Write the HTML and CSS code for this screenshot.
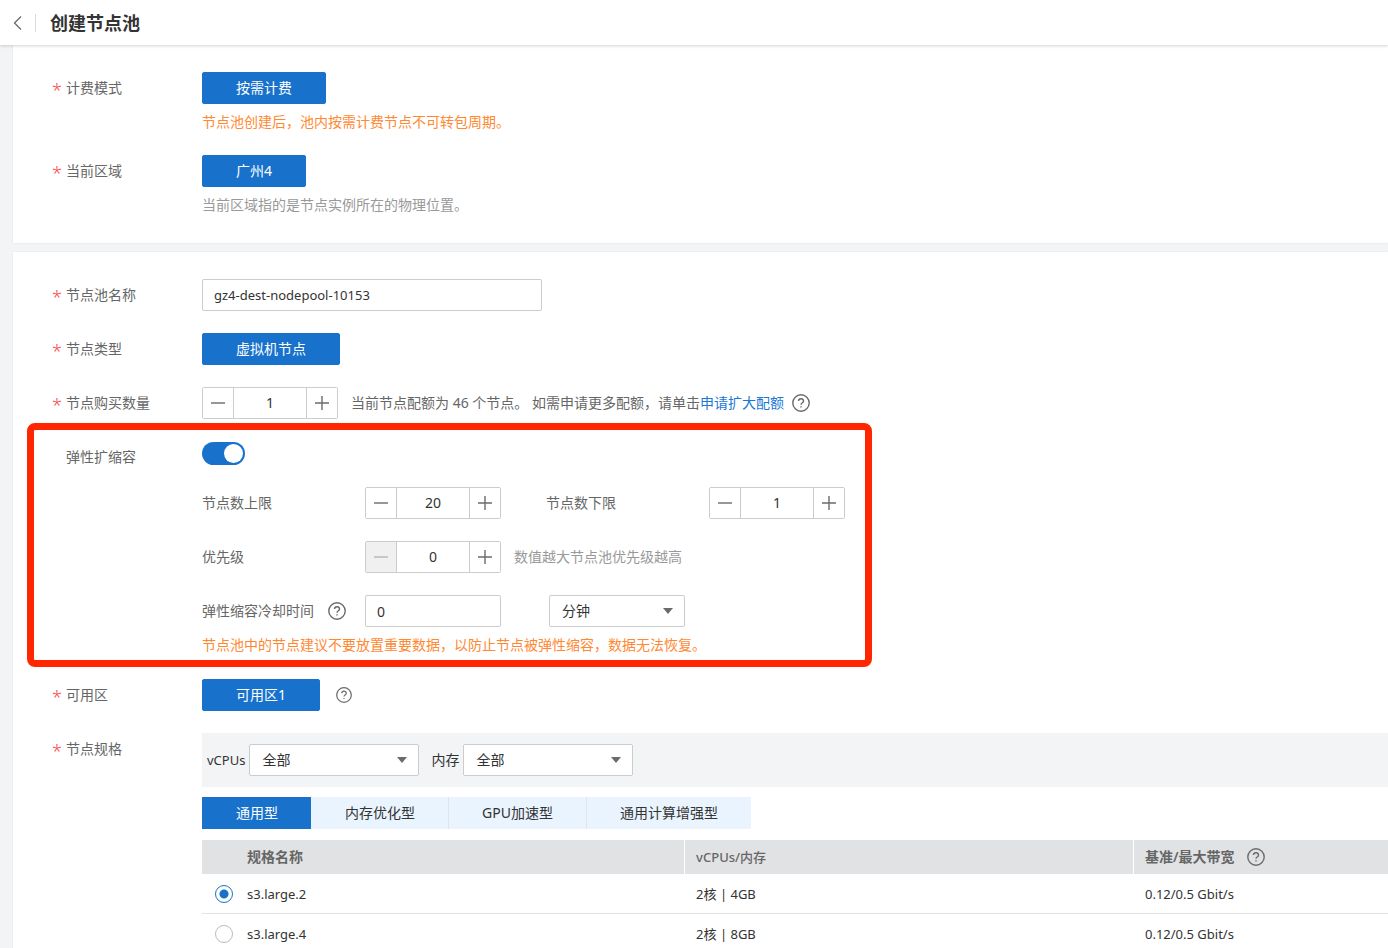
FILE: index.html
```html
<!DOCTYPE html>
<html lang="zh-CN">
<head>
<meta charset="utf-8">
<meta name="viewport" content="width=device-width, initial-scale=1">
<title>创建节点池</title>
<link rel="stylesheet" href="styles.css">
</head>
<body>
<svg class="sprite" aria-hidden="true">
  <symbol id="help" viewBox="0 0 18 18"><circle cx="9" cy="9" r="8.2"/><path d="M6.5 7.1C6.5 5.6 7.5 4.7 9 4.7s2.5.9 2.5 2.2c0 1.1-.6 1.6-1.3 2.1C9.400 9.500 9 9.900 9 10.800M9 12.300v1.300"/></symbol>
  <symbol id="minus" viewBox="0 0 14 14"><path d="M0 7h14"/></symbol>
  <symbol id="plus" viewBox="0 0 14 14"><path d="M0 7h14M7 0v14"/></symbol>
</svg>

<header class="topbar">
  <button class="back" type="button" aria-label="返回"><svg viewBox="0 0 9 14"><path d="M8 .5 1.500 7 8 13.500"/></svg></button>
  <h1 class="title">创建节点池</h1>
</header>

<main class="page">
  <section class="card card-billing">
    <div class="row">
      <span class="label required">计费模式</span>
      <div class="field">
        <button class="choice" type="button">按需计费</button>
        <p class="hint warn">节点池创建后，池内按需计费节点不可转包周期。</p>
      </div>
    </div>
    <div class="row">
      <span class="label required">当前区域</span>
      <div class="field">
        <button class="choice" type="button">广州4</button>
        <p class="hint">当前区域指的是节点实例所在的物理位置。</p>
      </div>
    </div>
  </section>

  <section class="card card-pool">
    <div class="row">
      <label class="label required" for="pool-name">节点池名称</label>
      <div class="field"><input class="text name" id="pool-name" type="text" value="gz4-dest-nodepool-10153"></div>
    </div>
    <div class="row">
      <span class="label required">节点类型</span>
      <div class="field"><button class="choice" type="button">虚拟机节点</button></div>
    </div>
    <div class="row">
      <label class="label required" for="count">节点购买数量</label>
      <div class="field line">
        <div class="stepper">
          <button type="button" aria-label="减少"><svg><use href="#minus"/></svg></button>
          <input id="count" type="text" inputmode="numeric" value="1">
          <button type="button" aria-label="增加"><svg><use href="#plus"/></svg></button>
        </div>
        <span class="quota">当前节点配额为 46 个节点。 如需申请更多配额，请单击<a href="#">申请扩大配额</a></span>
        <svg class="help"><use href="#help"/></svg>
      </div>
    </div>

    <div class="row scaling">
      <label class="label" for="scaling">弹性扩缩容</label>
      <div class="field stack">
        <div class="switch-line"><input class="switch" id="scaling" type="checkbox" role="switch" checked></div>
        <div class="line">
          <label class="sublabel" for="max">节点数上限</label>
          <div class="stepper">
            <button type="button" aria-label="减少"><svg><use href="#minus"/></svg></button>
            <input id="max" type="text" inputmode="numeric" value="20">
            <button type="button" aria-label="增加"><svg><use href="#plus"/></svg></button>
          </div>
          <label class="sublabel second" for="min">节点数下限</label>
          <div class="stepper">
            <button type="button" aria-label="减少"><svg><use href="#minus"/></svg></button>
            <input id="min" type="text" inputmode="numeric" value="1">
            <button type="button" aria-label="增加"><svg><use href="#plus"/></svg></button>
          </div>
        </div>
        <div class="line">
          <label class="sublabel" for="priority">优先级</label>
          <div class="stepper">
            <button type="button" aria-label="减少" disabled><svg><use href="#minus"/></svg></button>
            <input id="priority" type="text" inputmode="numeric" value="0">
            <button type="button" aria-label="增加"><svg><use href="#plus"/></svg></button>
          </div>
          <span class="note">数值越大节点池优先级越高</span>
        </div>
        <div>
          <div class="line">
            <div class="sublabel"><label for="cooldown">弹性缩容冷却时间</label><svg class="help"><use href="#help"/></svg></div>
            <input class="text short" id="cooldown" type="text" value="0">
            <div class="select short unit"><select aria-label="时间单位"><option>分钟</option></select></div>
          </div>
          <p class="hint warn">节点池中的节点建议不要放置重要数据，以防止节点被弹性缩容，数据无法恢复。</p>
        </div>
      </div>
    </div>

    <div class="row">
      <span class="label required">可用区</span>
      <div class="field line"><button class="choice" type="button">可用区1</button><svg class="help small"><use href="#help"/></svg></div>
    </div>

    <div class="row">
      <span class="label required">节点规格</span>
      <div class="field">
        <div class="filters">
          <label class="cpu" for="cpu">vCPUs</label>
          <div class="select"><select id="cpu"><option>全部</option></select></div>
          <label class="mem" for="mem">内存</label>
          <div class="select"><select id="mem"><option>全部</option></select></div>
        </div>
        <div class="tabs" role="tablist">
          <button class="tab active" type="button" role="tab" aria-selected="true">通用型</button>
          <button class="tab" type="button" role="tab">内存优化型</button>
          <button class="tab" type="button" role="tab">GPU加速型</button>
          <button class="tab" type="button" role="tab">通用计算增强型</button>
        </div>
        <table class="specs">
          <thead>
            <tr><th class="col-name">规格名称</th><th class="col-cpu">vCPUs/内存</th><th><div class="line">基准/最大带宽<svg class="help"><use href="#help"/></svg></div></th></tr>
          </thead>
          <tbody>
            <tr><td><label class="spec"><input type="radio" name="spec" checked>s3.large.2</label></td><td>2核 | 4GB</td><td>0.12/0.5 Gbit/s</td></tr>
            <tr><td><label class="spec"><input type="radio" name="spec">s3.large.4</label></td><td>2核 | 8GB</td><td>0.12/0.5 Gbit/s</td></tr>
          </tbody>
        </table>
      </div>
    </div>
  </section>
</main>
</body>
</html>
```

FILE: styles.css
```css
*, *::before, *::after { box-sizing: border-box; }

body {
  margin: 0;
  height: 100vh;
  display: flex;
  flex-direction: column;
  background: #f3f4f6;
  color: #333;
  font: 14px/20px "Noto Sans", "Noto Sans CJK SC", sans-serif;
}

button, input, select { font: inherit; color: inherit; margin: 0; }
button { cursor: pointer; }
a { color: #1a78d6; text-decoration: none; }
svg { fill: none; stroke: #6b6b6b; flex: none; }
.sprite { position: absolute; width: 0; height: 0; }

.topbar {
  flex: none;
  display: flex;
  align-items: center;
  height: 45px;
  background: #fff;
  box-shadow: 0 1px 3px rgba(0, 0, 0, .18);
  z-index: 1;
}
.back {
  width: 36px;
  height: 18px;
  padding: 0 0 0 13px;
  border: 0;
  border-right: 1px solid #dcdcdc;
  background: none;
  text-align: left;
}
.back svg { display: block; width: 9px; height: 14px; stroke-width: 1.3; }
.title { margin: 0 0 0 14px; font-size: 18px; line-height: 24px; font-weight: 700; }

.page {
  flex: 1;
  min-height: 0;
  padding-left: 13px;
  overflow: auto;
  scrollbar-width: none;
}

.card {
  display: flex;
  flex-direction: column;
  gap: 22px;
  padding: 27px 0 28px 39px;
  background: #fff;
  box-shadow: 0 0 2px rgba(0, 0, 0, .08);
}
.card + .card { margin-top: 9px; }
.card-billing { gap: 23px; }

.row { display: flex; align-items: flex-start; }
.label {
  flex: none;
  width: 150px;
  padding-left: 14px;
  line-height: 32px;
  color: #666;
}
.required { padding-left: 0; }
.required::before {
  content: "*";
  display: inline-block;
  width: 14px;
  color: #f5484c;
  font-size: 18px;
  font-weight: 300;
  line-height: 20px;
  vertical-align: -4px;
}
.field { flex: 1; min-width: 0; }
.line { display: flex; align-items: center; }
.stack { display: flex; flex-direction: column; gap: 22px; }

.choice {
  display: block;
  height: 32px;
  padding: 0 33px;
  border: 1px solid #1872cc;
  border-radius: 2px;
  background: #1872cc;
  color: #fff;
}
.hint { margin: 8px 0 0; color: #999; }
.warn { color: #ff8833; }

.text {
  display: block;
  height: 32px;
  padding: 0 11px;
  border: 1px solid #ccc;
  border-radius: 2px;
  background: #fff;
}
.name { width: 340px; font-size: 13px; }
.short { width: 136px; }

.stepper {
  display: flex;
  width: 136px;
  height: 32px;
  border: 1px solid #ccc;
  border-radius: 2px;
}
.stepper button {
  display: flex;
  align-items: center;
  justify-content: center;
  width: 30px;
  padding: 0;
  border: 0;
  background: #fff;
}
.stepper button:disabled { background: #f0f0f0; }
.stepper svg { width: 14px; height: 14px; stroke-width: 1.4; }
.stepper button:disabled svg { stroke: #b5b5b5; }
.stepper input {
  flex: 1;
  min-width: 0;
  padding: 0;
  border: solid #ccc;
  border-width: 0 1px;
  text-align: center;
}

.help { width: 18px; height: 18px; stroke-width: 1.4; }
.help.small { width: 16px; height: 16px; margin-left: 16px; }
.quota { margin: 0 8px 0 13px; color: #666; }
.note { margin-left: 13px; color: #999; }

.scaling { position: relative; padding-bottom: 2px; }
.scaling::after {
  content: "";
  position: absolute;
  top: -18px;
  left: -25px;
  width: 845px;
  height: 244px;
  border: 7px solid #ff2600;
  border-radius: 8px;
  pointer-events: none;
}
.switch-line { display: flex; align-items: flex-end; height: 24px; }
.switch {
  appearance: none;
  display: flex;
  justify-content: flex-end;
  width: 43px;
  height: 23px;
  padding: 2px;
  border-radius: 12px;
  background: #1872cc;
}
.switch::before { content: ""; width: 19px; height: 19px; border-radius: 50%; background: #fff; }
.sublabel { display: flex; align-items: center; gap: 14px; width: 163px; color: #666; }
.second { margin-left: 45px; }
.unit { margin-left: 48px; }

.select { display: grid; align-items: center; width: 170px; }
.select.short { width: 136px; }
.select select, .select::after { grid-area: 1 / 1; }
.select select {
  appearance: none;
  width: 100%;
  height: 32px;
  padding: 0 12px;
  border: 1px solid #ccc;
  border-radius: 2px;
  background: #fff;
}
.select::after {
  content: "";
  justify-self: end;
  margin-right: 12px;
  border: 5px solid transparent;
  border-top: 6px solid #6b6b6b;
  border-bottom: 0;
  pointer-events: none;
}

.filters {
  display: flex;
  align-items: center;
  gap: 4px;
  height: 54px;
  padding-left: 5px;
  background: #f3f4f6;
}
.cpu { font-size: 13px; }
.mem { margin-left: 8px; }

.tabs { display: flex; margin-top: 10px; }
.tab {
  height: 32px;
  padding: 0 33px;
  border: 0;
  border-left: 1px solid #dfe5eb;
  background: #e9f4ff;
}
.tab.active { border-color: #1872cc; background: #1872cc; color: #fff; }
.tab.active + .tab { border-left-color: #e9f4ff; }

.specs {
  width: 100%;
  margin-top: 11px;
  border-collapse: separate;
  border-spacing: 0;
  table-layout: fixed;
}
.specs th, .specs td { padding: 0 11px; text-align: left; }
.specs th { height: 34px; background: #e1e2e4; color: #666; font-weight: 600; }
.specs th + th { border-left: 1px solid #fff; }
.specs .col-name { width: 40.65%; padding-left: 45px; }
.specs .col-cpu { width: 37.85%; font-size: 13px; font-weight: 500; }
.specs th .help { margin-left: 12px; }
.specs td { height: 40px; border-bottom: 1px solid #dfe1e6; font-size: 13px; }
.specs td + td { padding-left: 12px; }
.specs td:first-child { padding-left: 13px; }
.spec { display: flex; align-items: center; gap: 14px; }
.spec input {
  appearance: none;
  width: 18px;
  height: 18px;
  border: 1px solid #bbb;
  border-radius: 50%;
  background: #fff;
}
.spec input:checked {
  border-color: #1872cc;
  background: radial-gradient(circle, #1872cc 4px, #fff 5px);
}
```
